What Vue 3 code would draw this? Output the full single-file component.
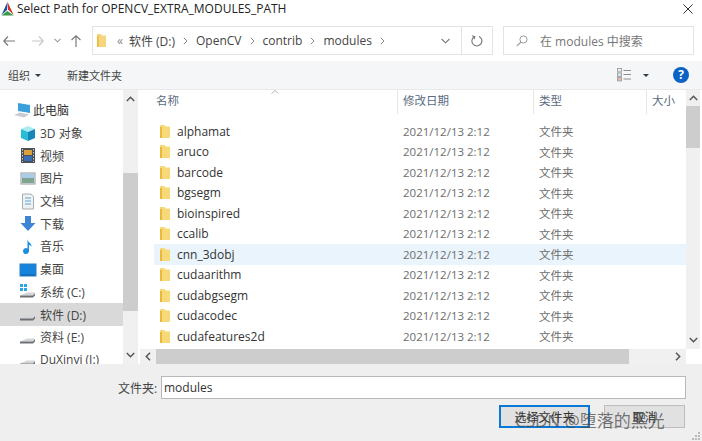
<template>
  <div class="dialog">
    <div class="titlebar">
      <svg class="logo" width="13" height="14" viewBox="0 0 13 14">
        <path d="M6.5 0 L0.5 13 L6 8z" fill="#1f4e9e" />
        <path d="M6.5 0 L12.8 13 L7 7.5z" fill="#d3302c" />
        <path d="M0.5 13.5 L6.3 9 L12.8 13.5z" fill="#3d9a4a" />
      </svg>
      <span class="title">Select Path for OPENCV_EXTRA_MODULES_PATH</span>
      <svg class="close" width="10" height="10" viewBox="0 0 10 10">
        <path d="M0.5 0.5 L9.5 9.5 M9.5 0.5 L0.5 9.5" stroke="#333" stroke-width="1" fill="none" />
      </svg>
    </div>

    <div class="navbar">
      <div class="nav-buttons">
        <svg class="nav-back" width="12" height="10" viewBox="0 0 12 10"><path d="M5 0.5 L0.8 5 L5 9.5 M1 5 H12" stroke="#7a7a7a" stroke-width="1.2" fill="none" /></svg>
        <svg class="nav-forward" width="12" height="10" viewBox="0 0 12 10"><path d="M7 0.5 L11.2 5 L7 9.5 M0 5 H11" stroke="#c8c8c8" stroke-width="1.2" fill="none" /></svg>
        <svg class="nav-down" width="7" height="5" viewBox="0 0 7 5"><path d="M0.5 0.8 L3.5 3.8 L6.5 0.8" stroke="#9a9a9a" stroke-width="1.1" fill="none" /></svg>
        <svg class="nav-up" width="10" height="12" viewBox="0 0 10 12"><path d="M0.5 5 L5 0.8 L9.5 5 M5 1 V12" stroke="#7a7a7a" stroke-width="1.2" fill="none" /></svg>
      </div>
      <div class="address">
        <svg class="addr-folder" width="9" height="13" viewBox="0 0 9 13">
          <path d="M0 0 H4 L5 1.5 H9 V13 H0z" fill="#f5d67e" />
          <path d="M0 2 H1.6 V13 H0z" fill="#e8b83e" />
        </svg>
        <span class="crumb-more">«</span>
        <template v-for="c in crumbs" :key="c">
          <span class="crumb">{{ c }}</span>
          <svg class="crumb-sep" width="5" height="8" viewBox="0 0 5 8"><path d="M0.8 0.8 L4 4 L0.8 7.2" stroke="#8a8a8a" stroke-width="1" fill="none" /></svg>
        </template>
        <svg class="addr-down" width="9" height="6" viewBox="0 0 9 6"><path d="M0.6 1 L4.5 4.8 L8.4 1" stroke="#777" stroke-width="1.1" fill="none" /></svg>
        <div class="addr-refresh">
          <svg width="12" height="12" viewBox="0 0 12 12"><path d="M3.4 1.6 A5 5 0 1 0 8 1.4 M1.2 0.8 L3.8 1.6 L3.2 4.2" stroke="#777" stroke-width="1.1" fill="none" /></svg>
        </div>
      </div>
      <div class="search">
        <svg width="12" height="12" viewBox="0 0 12 12"><circle cx="7.5" cy="4.5" r="3.6" stroke="#9a9a9a" fill="none" /><path d="M5 7 L0.8 11.2" stroke="#9a9a9a" stroke-width="1.1" /></svg>
        <span>在 modules 中搜索</span>
      </div>
    </div>

    <div class="toolbar">
      <span class="tool">组织</span>
      <span class="caret"></span>
      <span class="tool new-folder">新建文件夹</span>
      <svg class="view-icon" width="15" height="14" viewBox="0 0 15 14">
        <rect x="0.5" y="0.5" width="4" height="3.4" fill="#eee" stroke="#a5a5a5" />
        <rect x="0.5" y="5" width="4" height="3.4" fill="#d8e6f2" stroke="#a5a5a5" />
        <rect x="0.5" y="9.5" width="4" height="3.4" fill="#f0b9b0" stroke="#a5a5a5" />
        <path d="M6.5 2.5 H14 M6.5 6.5 H14 M6.5 11 H14" stroke="#8d8d8d" />
      </svg>
      <span class="caret view-caret"></span>
      <span class="help">?</span>
    </div>

    <div class="main">
      <div class="tree">
        <div class="tree-list">
          <div
            v-for="item in tree"
            :key="item.label"
            class="tree-item"
            :class="{ selected: item.selected, top: item.icon === 'pc' }"
          >
            <svg class="tree-icon" width="18" height="17" viewBox="0 0 18 17">
              <template v-if="item.icon === 'pc'">
                <path d="M4 1 L16 3 V11 L4 9z" fill="#3b9fdc" />
                <path d="M0 13 L6 10.5 L15 12.5 L10 15.5z" fill="#c5ccd2" />
              </template>
              <template v-else-if="item.icon === 'cube'">
                <path d="M9 1 L16 4 L9 7 L2 4z" fill="#a8ecf2" />
                <path d="M2 4 L9 7 V16 L2 13z" fill="#2bbbd6" />
                <path d="M16 4 L9 7 V16 L16 13z" fill="#1486b8" />
              </template>
              <template v-else-if="item.icon === 'film'">
                <rect x="2" y="1" width="14" height="15" fill="#4a4f58" />
                <rect x="5" y="3" width="8" height="5" fill="#d8a13a" />
                <rect x="5" y="9" width="8" height="5" fill="#3b6db5" />
                <path d="M3.5 2 V15 M14.5 2 V15" stroke="#c8c8c8" stroke-dasharray="1.5 1.5" />
              </template>
              <template v-else-if="item.icon === 'pic'">
                <rect x="2" y="3" width="14" height="11" fill="#f3f3f3" stroke="#8f98a0" />
                <path d="M3 8 H15 V13 H3z" fill="#7fa58e" />
                <path d="M3 4 H15 V8 H3z" fill="#a9cde8" />
              </template>
              <template v-else-if="item.icon === 'doc'">
                <path d="M3.5 1 H12 L14.5 3.5 V16 H3.5z" fill="#eef0f2" stroke="#a8adb2" />
                <path d="M6 5 H12 M6 8 H12 M6 11 H12" stroke="#5fa8d8" />
              </template>
              <template v-else-if="item.icon === 'down'">
                <path d="M6 1 H12 V8 H16.5 L9 16 L1.5 8 H6z" fill="#3d84d4" />
              </template>
              <template v-else-if="item.icon === 'music'">
                <path d="M8.5 1 C9 5 13 5 12.5 9 C12 7.5 10.5 7 10 7 V13 A3 3 0 1 1 8.5 10.5z" fill="#1e8fe0" />
              </template>
              <template v-else-if="item.icon === 'desk'">
                <rect x="1" y="3" width="16" height="12" fill="#1683dc" stroke="#2f7ec0" />
                <path d="M2 14 H16" stroke="#0f5fa8" />
              </template>
              <template v-else>
                <rect v-if="item.icon === 'sys'" x="1" y="1" width="3" height="3" fill="#2aa6e8" />
                <rect v-if="item.icon === 'sys'" x="5" y="1" width="3" height="3" fill="#2aa6e8" />
                <rect v-if="item.icon === 'sys'" x="1" y="5" width="3" height="3" fill="#2aa6e8" />
                <rect v-if="item.icon === 'sys'" x="5" y="5" width="3" height="3" fill="#2aa6e8" />
                <path d="M1 12.5 L8 9.5 H16 L14 12.5z" fill="#d4d6d8" />
                <path d="M1 12.5 H14 L16 10 V12.5 L14 14.5 H1z" fill="#6c7074" />
              </template>
            </svg>
            <span>{{ item.label }}</span>
          </div>
        </div>
        <div class="tree-scroll">
          <svg class="arrow" width="9" height="6" viewBox="0 0 9 6"><path d="M0.8 5 L4.5 1.3 L8.2 5" stroke="#555" stroke-width="1.5" fill="none" /></svg>
          <div class="tree-track"><div class="tree-thumb"></div></div>
          <svg class="arrow" width="9" height="6" viewBox="0 0 9 6"><path d="M0.8 1 L4.5 4.7 L8.2 1" stroke="#555" stroke-width="1.5" fill="none" /></svg>
        </div>
      </div>

      <div class="content">
        <div class="files-wrap">
          <div class="files">
            <div class="header">
              <div class="col col-name">名称<svg class="sort" width="8" height="4" viewBox="0 0 8 4"><path d="M0.5 3.5 L4 0.5 L7.5 3.5" stroke="#b5b5b5" fill="none" /></svg></div>
              <div class="col">修改日期</div>
              <div class="col">类型</div>
              <div class="col">大小</div>
            </div>
            <div class="rows">
              <div v-for="f in files" :key="f" class="row" :class="{ hover: f === 'cnn_3dobj' }">
                <div class="cell-name">
                  <svg width="10" height="13" viewBox="0 0 10 13">
                    <path d="M0 0 H4.5 L5.5 1.5 H10 V13 H0z" fill="#f8d978" />
                    <path d="M0 2 H2 V13 H0z" fill="#e9b93f" />
                  </svg>
                  <span>{{ f }}</span>
                </div>
                <div class="cell-sub">2021/12/13 2:12</div>
                <div class="cell-sub">文件夹</div>
              </div>
            </div>
          </div>
          <div class="v-scroll">
            <svg class="arrow" width="9" height="6" viewBox="0 0 9 6"><path d="M0.8 5 L4.5 1.3 L8.2 5" stroke="#555" stroke-width="1.5" fill="none" /></svg>
            <div class="v-track"><div class="v-thumb"></div></div>
            <svg class="arrow" width="9" height="6" viewBox="0 0 9 6"><path d="M0.8 1 L4.5 4.7 L8.2 1" stroke="#555" stroke-width="1.5" fill="none" /></svg>
          </div>
        </div>
        <div class="h-row">
          <div class="h-scroll">
            <svg width="6" height="9" viewBox="0 0 6 9"><path d="M5 0.8 L1.3 4.5 L5 8.2" stroke="#555" stroke-width="1.5" fill="none" /></svg>
            <div class="h-thumb"></div>
            <svg class="h-right" width="6" height="9" viewBox="0 0 6 9"><path d="M1 0.8 L4.7 4.5 L1 8.2" stroke="#555" stroke-width="1.5" fill="none" /></svg>
          </div>
        </div>
      </div>
    </div>

    <div class="footer">
      <div class="name-row">
        <label>文件夹:</label>
        <div class="name-input">modules</div>
      </div>
      <div class="btn-row">
        <button class="btn primary">选择文件夹</button>
        <button class="btn">取消</button>
      </div>
      <span class="watermark">CSDN @堕落的黑光</span>
      <svg class="grip" width="8" height="8" viewBox="0 0 8 8">
        <path d="M6 0h2v2H6z M3 3h2v2H3z M6 3h2v2H6z M0 6h2v2H0z M3 6h2v2H3z M6 6h2v2H6z" fill="#b9b9b9" />
      </svg>
    </div>
  </div>
</template>

<script setup>
const crumbs = ['软件 (D:)', 'OpenCV', 'contrib', 'modules']

const tree = [
  { label: '此电脑', icon: 'pc' },
  { label: '3D 对象', icon: 'cube' },
  { label: '视频', icon: 'film' },
  { label: '图片', icon: 'pic' },
  { label: '文档', icon: 'doc' },
  { label: '下载', icon: 'down' },
  { label: '音乐', icon: 'music' },
  { label: '桌面', icon: 'desk' },
  { label: '系统 (C:)', icon: 'sys' },
  { label: '软件 (D:)', icon: 'drive', selected: true },
  { label: '资料 (E:)', icon: 'drive' },
  { label: 'DuXinyi (I:)', icon: 'drive' }
]

const files = [
  'alphamat',
  'aruco',
  'barcode',
  'bgsegm',
  'bioinspired',
  'ccalib',
  'cnn_3dobj',
  'cudaarithm',
  'cudabgsegm',
  'cudacodec',
  'cudafeatures2d'
]
</script>

<style scoped>
.dialog {
  position: relative;
  width: 702px;
  height: 441px;
  display: flex;
  flex-direction: column;
  overflow: hidden;
  background: #fff;
  color: #333;
  font-family: "Open Sans", "Noto Sans CJK SC", sans-serif;
  font-size: 12px;
}

.titlebar {
  height: 22px;
  display: flex;
  align-items: flex-start;
  padding: 1px 9px 0 1px;
  box-sizing: border-box;
}
.logo {
  margin-top: 1px;
}
.title {
  margin-left: 3px;
  font-size: 12px;
  line-height: 15px;
  color: #222;
}
.close {
  margin-left: auto;
  margin-top: 3px;
}

.navbar {
  height: 39px;
  display: flex;
  align-items: flex-start;
  padding: 4px 8px 0 0;
  box-sizing: border-box;
}
.nav-buttons {
  width: 92px;
  height: 29px;
  display: flex;
  align-items: center;
  flex-shrink: 0;
}
.nav-back {
  margin-left: 3px;
}
.nav-forward {
  margin-left: 17px;
}
.nav-down {
  margin-left: 10px;
}
.nav-up {
  margin-left: 10px;
}
.address {
  width: 401px;
  height: 29px;
  box-sizing: border-box;
  border: 1px solid #e3e3e3;
  display: flex;
  align-items: center;
  padding-left: 4px;
  color: #444;
}
.crumb-more {
  margin: 0 6px 0 11px;
  color: #888;
}
.crumb-sep {
  margin: 0 8px;
}
.addr-down {
  margin-left: auto;
  margin-right: 11px;
}
.addr-refresh {
  width: 30px;
  height: 27px;
  border-left: 1px solid #e3e3e3;
  display: flex;
  align-items: center;
  justify-content: center;
}
.search {
  width: 191px;
  height: 29px;
  box-sizing: border-box;
  margin-left: 10px;
  border: 1px solid #e3e3e3;
  display: flex;
  align-items: center;
  padding-left: 12px;
  gap: 12px;
  color: #777;
}

.toolbar {
  height: 29px;
  box-sizing: border-box;
  display: flex;
  align-items: center;
  padding: 0 13px 0 8px;
  background: #f5f6f7;
  border-bottom: 1px solid #e9e9e9;
}
.tool {
  font-size: 11px;
  color: #444;
}
.caret {
  margin-left: 5px;
  border-left: 3px solid transparent;
  border-right: 3px solid transparent;
  border-top: 3px solid #2c3e50;
}
.new-folder {
  margin-left: 26px;
}
.view-icon {
  margin-left: auto;
}
.view-caret {
  margin-left: 11px;
}
.help {
  margin-left: 24px;
  width: 16px;
  height: 16px;
  border-radius: 50%;
  background: #0a62c4;
  color: #fff;
  font-weight: 700;
  font-size: 12px;
  line-height: 16px;
  text-align: center;
}

.main {
  height: 274px;
  display: flex;
}

.tree {
  width: 138px;
  display: flex;
  flex-shrink: 0;
}
.tree-list {
  width: 123px;
  height: 274px;
  overflow: hidden;
  padding-top: 9px;
  box-sizing: border-box;
}
.tree-item {
  height: 22.7px;
  display: flex;
  align-items: center;
  padding-left: 19px;
  gap: 3px;
  white-space: nowrap;
  color: #444;
}
.tree-item.top {
  padding-left: 14px;
  gap: 1px;
  color: #333;
}
.tree-item.selected {
  background: #d9d9d9;
}
.tree-icon {
  flex-shrink: 0;
}
.tree-scroll,
.v-scroll {
  background: #f0f0f0;
  display: flex;
  flex-direction: column;
  align-items: center;
}
.tree-scroll {
  width: 15px;
  padding: 6px 0;
  box-sizing: border-box;
}
.tree-track {
  flex: 1;
  width: 100%;
  margin: 5px 0;
  padding-top: 66px;
  box-sizing: border-box;
}
.tree-thumb {
  height: 138px;
  background: #cdcdcd;
}

.content {
  flex: 1;
  display: flex;
  flex-direction: column;
  min-width: 0;
}
.files-wrap {
  flex: 1;
  display: flex;
  min-height: 0;
}
.files {
  width: 548px;
  padding-left: 2px;
  box-sizing: border-box;
}
.header {
  height: 24px;
  display: grid;
  grid-template-columns: 257px 136px 113px 40px;
}
.col {
  border-left: 1px solid #e5e5e5;
  padding: 3px 0 0 5px;
  color: #5a6b80;
  font-size: 11.5px;
  line-height: 16px;
}
.col-name {
  position: relative;
  border-left: 0;
  padding-left: 16px;
}
.sort {
  position: absolute;
  left: 131px;
  top: 0;
}
.rows {
  padding: 7px 0 0 14px;
}
.row {
  height: 20.5px;
  display: grid;
  grid-template-columns: 243px 136px 1fr;
  align-items: center;
}
.row.hover {
  background: #e9f4fc;
}
.cell-name {
  display: flex;
  align-items: center;
  gap: 7px;
  padding-left: 6px;
  color: #333;
}
.cell-sub {
  padding-left: 6px;
  color: #6d6d6d;
  font-size: 11.5px;
}
.v-scroll {
  width: 14px;
  padding: 5px 0 6px;
  box-sizing: border-box;
}
.v-track {
  flex: 1;
  width: 100%;
  margin-top: 5px;
}
.v-thumb {
  height: 42px;
  background: #cdcdcd;
}

.h-row {
  height: 15px;
  flex-shrink: 0;
  padding-left: 2px;
}
.h-scroll {
  width: 546px;
  height: 15px;
  background: #f0f0f0;
  display: flex;
  align-items: center;
  padding-left: 5px;
  box-sizing: border-box;
}
.h-thumb {
  width: 473px;
  height: 15px;
  margin-left: 5px;
  background: #cdcdcd;
}
.h-right {
  margin-left: 46px;
}

.footer {
  position: relative;
  flex: 1;
  background: #efefef;
  padding: 12px 16px 0 118px;
  box-sizing: border-box;
}
.name-row {
  display: flex;
  align-items: center;
  gap: 6px;
}
.name-row label {
  width: 37px;
  color: #444;
  font-size: 12px;
  white-space: nowrap;
}
.name-input {
  flex: 1;
  height: 23px;
  box-sizing: border-box;
  background: #fff;
  border: 1px solid #b8b8b8;
  padding-left: 2px;
  line-height: 21px;
  color: #333;
}
.btn-row {
  display: flex;
  justify-content: flex-end;
  gap: 14px;
  margin-top: 6px;
  padding-right: 1px;
}
.btn {
  height: 23px;
  box-sizing: border-box;
  width: 81px;
  padding: 0;
  background: #e1e1e1;
  border: 1px solid #bdbdbd;
  font: inherit;
  color: #333;
}
.btn.primary {
  width: 91px;
  border: 2px solid #0a78d7;
}
.watermark {
  position: absolute;
  left: 515px;
  top: 46px;
  font-size: 17px;
  line-height: 22px;
  white-space: nowrap;
  color: rgba(70, 70, 70, 0.72);
}
.grip {
  position: absolute;
  right: 2px;
  bottom: 1px;
}
</style>

<style>
html,
body {
  margin: 0;
  background: #fff;
}
</style>
